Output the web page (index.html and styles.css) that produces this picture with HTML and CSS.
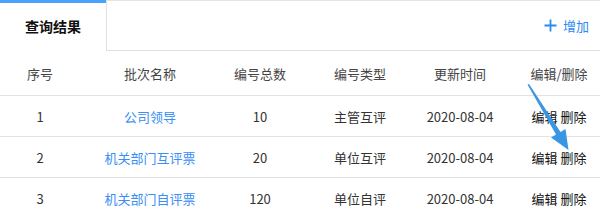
FILE: index.html
```html
<!DOCTYPE html>
<html lang="zh">
<head>
<meta charset="utf-8">
<link rel="stylesheet" href="styles.css">
</head>
<body>
<div class="page">
  <div class="tabbar">
    <div class="tab active">查询结果</div>
    <div class="tab-rest">
      <a class="add"><svg class="plus" width="13" height="13" viewBox="0 0 13 13"><path d="M6.5 0.5V12.5M0.5 6.5H12.5" stroke="#2a8af0" stroke-width="1.8" fill="none"/></svg><span>增加</span></a>
    </div>
  </div>
  <table class="grid">
    <colgroup>
      <col class="c1"><col class="c2"><col class="c3"><col class="c4"><col class="c5"><col class="c6">
    </colgroup>
    <thead>
      <tr><th>序号</th><th>批次名称</th><th>编号总数</th><th>编号类型</th><th>更新时间</th><th class="ops">编辑/删除</th></tr>
    </thead>
    <tbody>
      <tr><td>1</td><td class="link">公司领导</td><td>10</td><td>主管互评</td><td>2020-08-04</td><td class="ops">编辑 删除</td></tr>
      <tr><td>2</td><td class="link">机关部门互评票</td><td>20</td><td>单位互评</td><td>2020-08-04</td><td class="ops">编辑 删除</td></tr>
      <tr><td>3</td><td class="link">机关部门自评票</td><td>120</td><td>单位自评</td><td>2020-08-04</td><td class="ops">编辑 删除</td></tr>
    </tbody>
  </table>
  <svg class="arrow" width="600" height="216" viewBox="0 0 600 216">
    <polygon points="527.5,84.5 529,84 560.5,132 565.5,129 568.5,150 551,137.5 556,134.5" fill="#3a95e3"/>
  </svg>
</div>
</body>
</html>
```
FILE: styles.css
```css
html, body {
  margin: 0;
  padding: 0;
  background: #fff;
}
body {
  font-family: "Noto Sans CJK SC", "Noto Sans", sans-serif;
  color: #333;
  width: 600px;
  height: 216px;
  overflow: hidden;
}
.page {
  position: relative;
  width: 600px;
  height: 216px;
}
.tabbar {
  display: flex;
  height: 51px;
}
.tab {
  width: 106px;
  box-sizing: border-box;
  border-top: 3px solid #4aa2ff;
  display: flex;
  align-items: center;
  justify-content: center;
  font-size: 14px;
  font-weight: bold;
  color: #111;
  padding-bottom: 2px;
}
.tab-rest {
  flex: 1;
  box-sizing: border-box;
  border-top: 1px solid #e4e4e4;
  border-left: 1px solid #e0e0e0;
  border-bottom: 1px solid #e0e0e0;
  display: flex;
  align-items: center;
  justify-content: flex-end;
  padding-right: 11px;
  padding-bottom: 1px;
}
.add {
  display: flex;
  align-items: center;
  gap: 6px;
  color: #2a8af0;
  font-size: 13px;
}
.plus {
  display: block;
}
.grid {
  width: 600px;
  border-collapse: collapse;
  table-layout: fixed;
  font-size: 13px;
}
.c1 { width: 80px; }
.c2 { width: 140px; }
.c3 { width: 80px; }
.c4 { width: 120px; }
.c5 { width: 80px; }
.c6 { width: 100px; }
.grid th, .grid td {
  text-align: center;
  padding: 0;
  border-bottom: 1px solid #e2e2e2;
  white-space: nowrap;
}
.grid th {
  height: 44px;
  font-weight: normal;
  color: #444;
}
.grid td {
  height: 40px;
  color: #333;
}
.grid .ops {
  padding-left: 18px;
}
.grid td.ops {
  color: #111;
}
.grid td.link {
  color: #3a8ef5;
}
.arrow {
  position: absolute;
  left: 0;
  top: 0;
  pointer-events: none;
}
```
